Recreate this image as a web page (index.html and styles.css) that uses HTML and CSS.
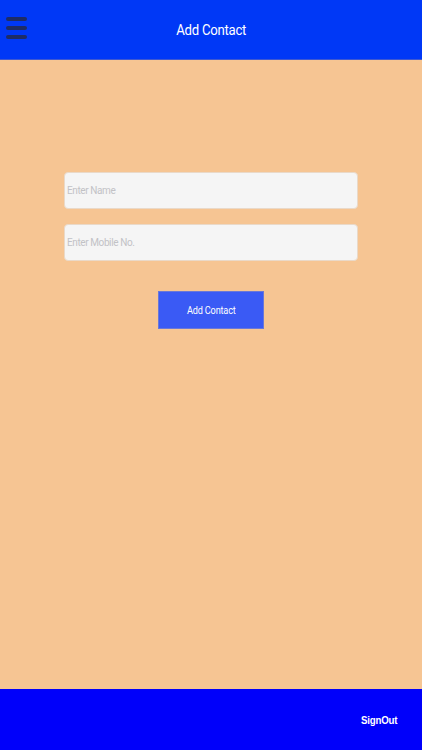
FILE: index.html
```html
<!DOCTYPE html>
<html>
<head>
<meta charset="utf-8">
<link rel="stylesheet" href="styles.css">
</head>
<body>
<div class="app">
  <header class="topbar">
    <div class="menu">
      <span></span><span></span><span></span>
    </div>
    <h1 class="title">Add Contact</h1>
  </header>
  <main class="content">
    <div class="form">
      <input class="field" type="text" placeholder="Enter Name">
      <input class="field" type="text" placeholder="Enter Mobile No.">
      <button class="submit"><span class="submit-label">Add Contact</span></button>
    </div>
  </main>
  <footer class="bottombar">
    <span class="signout">SignOut</span>
  </footer>
</div>
</body>
</html>
```
FILE: styles.css
```css
* { box-sizing: border-box; }
html, body { margin: 0; padding: 0; }
body { font-family: Roboto, "Liberation Sans", sans-serif; }
.app {
  width: 422px;
  height: 750px;
  display: flex;
  flex-direction: column;
  background: #F6C593;
}
.topbar {
  height: 60px;
  background: #0038F6;
  display: flex;
  align-items: center;
  justify-content: center;
  position: relative;
  border-bottom: 1px solid #3f58d0;
}
.menu {
  position: absolute;
  left: 6px;
  top: 17px;
  display: flex;
  flex-direction: column;
  gap: 5px;
}
.menu span {
  display: block;
  width: 21px;
  height: 4px;
  border-radius: 2px;
  background: #1E2C66;
}
.title {
  margin: 0;
  font-weight: 400;
  font-size: 15.5px;
  color: #fff;
  letter-spacing: -0.3px;
  transform: scaleX(0.85);
}
.content {
  flex: 1;
  display: flex;
  justify-content: center;
  padding-top: 112px;
}
.form {
  width: 294px;
  display: flex;
  flex-direction: column;
  align-items: center;
}
.field {
  width: 294px;
  height: 37px;
  margin: 0 0 15px 0;
  border: 1px solid #ead9c8;
  border-radius: 4px;
  background: #F5F5F5;
  padding: 0 2px;
  font-family: Roboto, "Liberation Sans", sans-serif;
  font-size: 10px;
  letter-spacing: -0.4px;
  outline: none;
}
.field::placeholder { color: #c2c2c6; }
.submit {
  margin-top: 15px;
  width: 106px;
  height: 38px;
  border: 1px solid #6a78d8;
  background: #3A5AF5;
  color: #fff;
  font-family: Roboto, "Liberation Sans", sans-serif;
  font-size: 11px;
  cursor: pointer;
  padding: 0;
}
.submit-label {
  display: inline-block;
  letter-spacing: -0.2px;
  transform: scaleX(0.83);
}
.bottombar {
  height: 61px;
  background: #0000FA;
  display: flex;
  align-items: center;
  justify-content: flex-end;
  padding-right: 25px;
}
.signout {
  display: inline-block;
  color: #fff;
  font-family: "Liberation Sans", Arial, sans-serif;
  font-weight: 700;
  font-size: 11px;
  letter-spacing: -0.2px;
  transform: scaleX(0.88);
  transform-origin: right center;
}
```
